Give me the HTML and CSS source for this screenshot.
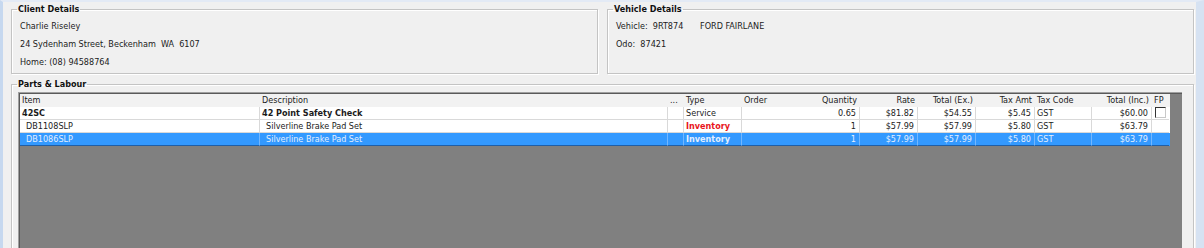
FILE: index.html
```html
<!DOCTYPE html>
<html>
<head>
<meta charset="utf-8">
<link rel="stylesheet" href="styles.css">
</head>
<body>
<div class="window">
  <div class="top">
    <fieldset class="group client">
      <legend>Client Details</legend>
      <div class="line">Charlie Riseley</div>
      <div class="line">24 Sydenham Street, Beckenham&nbsp; WA&nbsp; 6107</div>
      <div class="line">Home: (08) 94588764</div>
    </fieldset>
    <fieldset class="group vehicle">
      <legend>Vehicle Details</legend>
      <div class="line"><span class="veh">Vehicle:&nbsp; 9RT874</span><span>FORD FAIRLANE</span></div>
      <div class="line">Odo:&nbsp; 87421</div>
    </fieldset>
  </div>
  <fieldset class="group parts">
    <legend>Parts &amp; Labour</legend>
    <div class="grid">
      <div class="row head">
        <div class="c">Item</div>
        <div class="c">Description</div>
        <div class="c">...</div>
        <div class="c">Type</div>
        <div class="c">Order</div>
        <div class="c r">Quantity</div>
        <div class="c r">Rate</div>
        <div class="c r">Total (Ex.)</div>
        <div class="c r">Tax Amt</div>
        <div class="c">Tax Code</div>
        <div class="c r">Total (Inc.)</div>
        <div class="c">FP</div>
      </div>
      <div class="row data">
        <div class="c b">42SC</div>
        <div class="c b">42 Point Safety Check</div>
        <div class="c"></div>
        <div class="c">Service</div>
        <div class="c nob"></div>
        <div class="c r">0.65</div>
        <div class="c r">$81.82</div>
        <div class="c r">$54.55</div>
        <div class="c r">$5.45</div>
        <div class="c">GST</div>
        <div class="c r">$60.00</div>
        <div class="c fp"><span class="chk"></span></div>
      </div>
      <div class="row data">
        <div class="c ind">DB1108SLP</div>
        <div class="c ind">Silverline Brake Pad Set</div>
        <div class="c"></div>
        <div class="c b red">Inventory</div>
        <div class="c nob"></div>
        <div class="c r">1</div>
        <div class="c r">$57.99</div>
        <div class="c r">$57.99</div>
        <div class="c r">$5.80</div>
        <div class="c">GST</div>
        <div class="c r">$63.79</div>
        <div class="c fp"></div>
      </div>
      <div class="row data sel">
        <div class="c ind">DB1086SLP</div>
        <div class="c ind">Silverline Brake Pad Set</div>
        <div class="c"></div>
        <div class="c b">Inventory</div>
        <div class="c nob"></div>
        <div class="c r">1</div>
        <div class="c r">$57.99</div>
        <div class="c r">$57.99</div>
        <div class="c r">$5.80</div>
        <div class="c">GST</div>
        <div class="c r">$63.79</div>
        <div class="c fp"></div>
      </div>
    </div>
  </fieldset>
</div>
</body>
</html>
```
FILE: styles.css
```css
html, body {
  margin: 0;
  padding: 0;
  height: 248px;
  overflow: hidden;
}
body {
  background: #f0f0f0;
  font-family: "DejaVu Sans Condensed", "Liberation Sans", sans-serif;
  font-size: 9px;
  color: #1b1b1b;
}
.window {
  height: 248px;
  box-sizing: border-box;
  border-left: 3px solid #c6d8ef;
  border-right: 8px solid #d6e2f2;
  border-top: 2px solid #e3eaf5;
  padding: 1px 2px 0 8px;
  display: flex;
  flex-direction: column;
  gap: 4px;
}
.top {
  display: flex;
  gap: 9px;
}
.group {
  margin: 0;
  border: 1px solid #c4c4c4;
  box-shadow: inset 1px 1px 0 #ffffff, 1px 1px 0 #ffffff;
  min-width: 0;
}
.group legend {
  font-weight: bold;
  line-height: 13px;
  padding: 0 1px;
  margin-left: -3px;
  color: #111;
}
.client, .vehicle {
  padding: 1px 0 2px 8px;
}
.client { width: 587px; box-sizing: border-box; }
.vehicle { flex: 1; }
.line {
  line-height: 18px;
  height: 18px;
  white-space: nowrap;
  display: flex;
}
.veh { width: 84px; }
.parts {
  flex: 1;
  padding: 0 11px 0 7px;
}
.parts legend { margin-left: -2px; }
.grid {
  margin-top: 1px;
  height: 200px;
  background: #808080;
  border-top: 1px solid #a0a0a0;
  border-left: 1px solid #a0a0a0;
  box-shadow: inset 1px 1px 0 #5a5a5a;
  padding: 1px 0 0 1px;
  box-sizing: border-box;
  margin-left: -1px;
}
.row {
  display: grid;
  grid-template-columns: 240px 408px 16px 58px 57px 61px 58px 58px 59px 57px 60px 17px;
  width: 1150px;
  white-space: nowrap;
}
.row.head {
  height: 13px;
  line-height: 13px;
  background: #f2f2f2;
  color: #222;
}
.row.data {
  height: 13px;
  line-height: 12px;
  background: #ffffff;
}
.c {
  padding: 0 2px;
  overflow: hidden;
  box-sizing: border-box;
}
.data .c {
  border-right: 1px solid #d9d9d9;
  border-bottom: 1px solid #d9d9d9;
}
.data .c.nob { border-right: none; }
.data .c.fp { border-right: none; }
.c.r { text-align: right; padding-right: 3px; }
.c.b { font-weight: bold; }
.c.ind { padding-left: 6px; }
.red { color: #e8141b; }
.row.sel {
  background: #3399ff;
  color: #e3efff;
}
.sel .c {
  border-right-color: #73b7ff;
  border-bottom-color: #1f5fa8;
}
.fp {
  display: flex;
  align-items: flex-start;
  padding-left: 3px;
}
.chk {
  width: 11px;
  height: 11px;
  box-sizing: border-box;
  background: #fff;
  border: 1px solid #333;
  border-right-color: #c8c8c8;
  border-bottom-color: #c8c8c8;
}
```
